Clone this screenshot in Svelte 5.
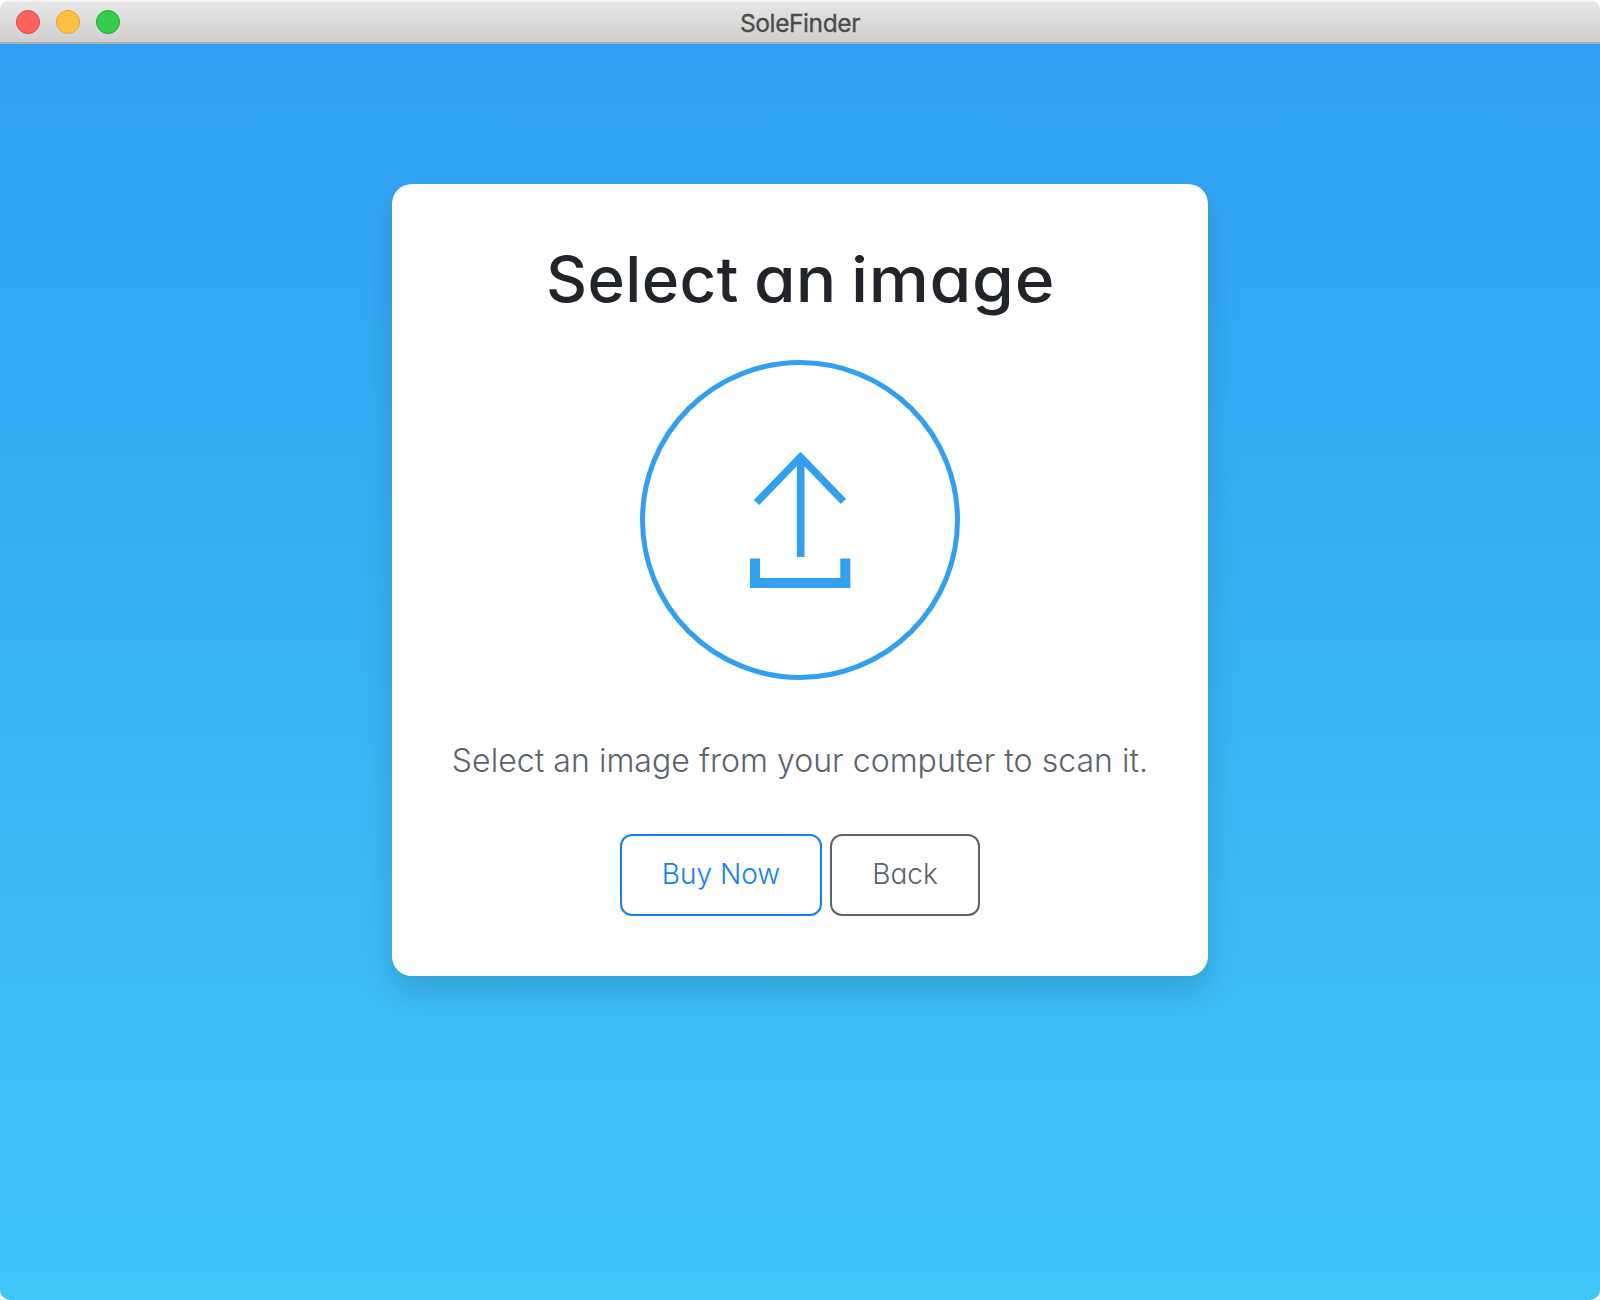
<script lang="ts">
  const controls = ['close', 'minimize', 'zoom'];
</script>

<div class="window">
  <header class="titlebar">
    <div class="controls">
      {#each controls as control}
        <button class="control {control}" aria-label={control}></button>
      {/each}
    </div>
    <span class="title">SoleFinder</span>
  </header>
  <main>
    <section class="card">
      <h1><span class="verb">Select</span> <span class="article">an</span> <span class="noun">image</span></h1>
      <svg class="upload" viewBox="0 0 320 320" width="320" height="320" aria-hidden="true">
        <circle cx="160" cy="160" r="157.5" stroke-width="5" />
        <path d="M160.7 197V98" stroke-width="7.6" />
        <path d="M116.5 142.5L160.5 97L203.5 141.5" stroke-width="7.4" />
        <path d="M115 198.5V223H205.3V198.5" stroke-width="10" />
      </svg>
      <p>Select an image from your computer to scan it.</p>
      <div class="actions">
        <button class="btn primary"><span>Buy Now</span></button>
        <button class="btn secondary"><span>Back</span></button>
      </div>
    </section>
  </main>
</div>

<style>
  :global(body) {
    margin: 0;
    background: #fff;
  }

  .window {
    display: flex;
    flex-direction: column;
    width: 1600px;
    height: 1300px;
    overflow: hidden;
    border-radius: 10px;
    font-family: Inter, 'Liberation Sans', sans-serif;
  }

  .titlebar {
    box-sizing: border-box;
    display: grid;
    grid-template-columns: 1fr auto 1fr;
    align-items: center;
    height: 44px;
    padding: 0 16px;
    border-bottom: 2px solid #aeaeae;
    background: linear-gradient(#f5f5f5 0, #f5f5f5 1px, #e6e6e6 2px, #cfcfcf 100%);
  }

  .controls {
    display: flex;
    gap: 16px;
    padding-top: 2px;
  }

  .control {
    box-sizing: border-box;
    width: 24px;
    height: 24px;
    padding: 0;
    border: 1px solid;
    border-radius: 50%;
  }

  .close {
    border-color: #e2463f;
    background: #ff625c;
  }

  .minimize {
    border-color: #e0a033;
    background: #ffbf40;
  }

  .zoom {
    border-color: #1dad2b;
    background: #35cb4b;
  }

  .title {
    color: #4b4b4b;
    font-size: 24.5px;
    line-height: 30px;
    padding-top: 4px;
    letter-spacing: -0.4px;
    -webkit-text-stroke: 0.3px #4b4b4b;
  }

  main {
    flex: 1;
    display: flex;
    justify-content: center;
    align-items: flex-start;
    padding-top: 140px;
    background: linear-gradient(#319ff3, #3fc7f8);
  }

  .card {
    box-sizing: border-box;
    display: flex;
    flex-direction: column;
    align-items: center;
    width: 816px;
    height: 792px;
    padding-top: 55px;
    border-radius: 20px;
    background: #fff;
    box-shadow: 0 16px 32px rgba(0, 0, 0, 0.15);
  }

  h1 {
    margin: 0 0 41px;
    color: #212529;
    font-size: 63px;
    font-weight: 500;
    line-height: 80px;
    white-space: nowrap;
    font-feature-settings: 'cv11';
  }

  h1 span {
    display: inline-block;
    transform-origin: left;
  }

  .verb {
    letter-spacing: 0.4px;
    transform: scaleX(1.01);
  }

  .article {
    margin-right: 3px;
    transform: scaleX(1.07);
  }

  .noun {
    margin-right: 13px;
    letter-spacing: 0.6px;
    transform: scaleX(1.075);
  }

  .upload {
    display: block;
    fill: none;
    stroke: #319ff3;
  }

  p {
    margin: 57px 0 0;
    color: #5c636d;
    font-size: 32px;
    font-weight: 300;
    line-height: 48px;
    letter-spacing: 0.04px;
    white-space: nowrap;
  }

  .actions {
    display: flex;
    gap: 8px;
    margin-top: 49px;
  }

  .btn {
    box-sizing: border-box;
    display: flex;
    justify-content: center;
    align-items: center;
    height: 82px;
    padding: 0 0 2px;
    border: 2px solid currentColor;
    border-radius: 12px;
    background: transparent;
    font: 300 28px/40px Inter, 'Liberation Sans', sans-serif;
    font-feature-settings: 'cv11';
    white-space: nowrap;
  }

  .primary {
    width: 202px;
    color: #147efb;
  }

  .secondary {
    width: 150px;
    color: #5c636d;
  }
</style>
